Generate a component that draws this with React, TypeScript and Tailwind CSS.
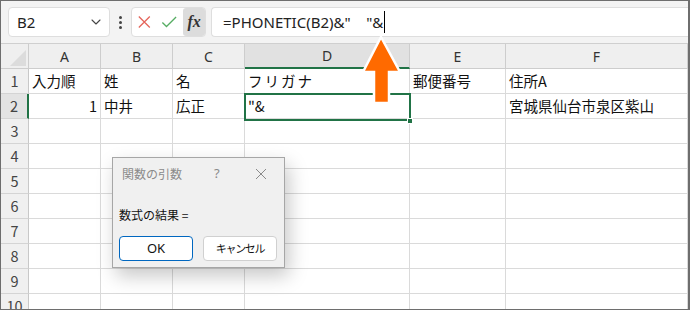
import React from 'react';
import { ChevronDown } from 'lucide-react';

const cjk = { fontFamily: '"Noto Sans CJK JP", "Noto Sans", sans-serif' };
const latin = { fontFamily: '"Noto Sans", "Noto Sans CJK JP", sans-serif' };

const cols = ['A', 'B', 'C', 'D', 'E', 'F'];

const rows: string[][] = [
  ['入力順', '姓', '名', 'フリガナ', '郵便番号', '住所A'],
  ['1', '中井', '広正', '"&', '', '宮城県仙台市泉区紫山'],
  ['', '', '', '', '', ''],
  ['', '', '', '', '', ''],
  ['', '', '', '', '', ''],
  ['', '', '', '', '', ''],
  ['', '', '', '', '', ''],
  ['', '', '', '', '', ''],
  ['', '', '', '', '', ''],
  ['', '', '', '', '', ''],
];

const gridCols = 'grid grid-cols-[28px_72px_72px_72px_165px_96px_1fr]';

export default function App() {
  return (
    <div className="relative w-[690px] h-[310px] overflow-hidden bg-white border border-r-2 border-[#6e6e6e]">
      {/* Formula bar */}
      <div className="h-[43px] bg-[#f3f3f3] border-b border-[#cfcfcf] flex items-center pl-[7px] gap-0">
        <div className="w-[102px] h-[30px] bg-white border border-[#dedede] rounded-[4px] flex items-center justify-between pl-[8px] pr-[5px]">
          <span className="text-[15px] text-[#222]" style={latin}>B2</span>
          <ChevronDown className="w-4 h-4 text-[#444]" strokeWidth={1.6} />
        </div>
        <div className="w-[21px] flex flex-col items-center gap-[2px]">
          <span className="w-[3px] h-[3px] bg-[#444] rounded-full" />
          <span className="w-[3px] h-[3px] bg-[#444] rounded-full" />
          <span className="w-[3px] h-[3px] bg-[#444] rounded-full" />
        </div>
        <div className="w-[75px] h-[30px] bg-white border border-[#dedede] rounded-[4px] flex items-center pl-[4px]">
          <svg width="16" height="16" viewBox="0 0 16 16" className="ml-[1px]">
            <path d="M2 2 L14 14 M14 2 L2 14" stroke="#e5645a" strokeWidth="1.4" fill="none" />
          </svg>
          <svg width="18" height="16" viewBox="0 0 18 16" className="ml-[9px]">
            <path d="M1.5 8.5 L6 13 L16.5 2.5" stroke="#56ad63" strokeWidth="1.4" fill="none" />
          </svg>
          <div className="ml-[6px] w-[24px] h-[28px] bg-[#dcdcdc] rounded-[3px] flex items-center justify-center">
            <span className="italic text-[16px] text-[#333] font-semibold" style={{ fontFamily: '"Liberation Serif", serif' }}>fx</span>
          </div>
        </div>
        <div className="ml-[5px] flex-1 h-[30px] bg-white border border-[#dedede] rounded-l-[4px] border-r-0 flex items-center pl-[11px]">
          <span className="text-[15px] text-[#222] whitespace-pre" style={latin}>=PHONETIC(B2)&amp;"    "&amp;</span>
          <span className="w-px h-[22px] bg-black ml-[1px]" />
        </div>
      </div>

      {/* Column header */}
      <div className={`${gridCols} h-[25px]`}>
        <div className="bg-[#efefef] border-r border-b border-[#cdcdcd] relative">
          <svg width="16" height="16" viewBox="0 0 16 16" className="absolute right-[2px] bottom-[2px]">
            <path d="M16 0 L16 16 L0 16 Z" fill="#dcdcdc" />
          </svg>
        </div>
        {cols.map((c) => (
          <div
            key={c}
            className={`flex items-center justify-center text-[14px] text-[#333] border-r ${
              c === 'D' ? 'bg-[#e1e1e1] border-b-2 border-b-[#217346] border-r-[#cdcdcd]' : 'bg-[#efefef] border-b border-[#cdcdcd]'
            }`}
            style={latin}
          >
            {c}
          </div>
        ))}
      </div>

      {/* Rows */}
      {rows.map((r, i) => (
        <div key={i} className={`${gridCols} h-[25px]`}>
          <div
            className={`flex items-center justify-center text-[14.5px] text-[#444] border-b border-[#d4d4d4] ${
              i === 1 ? 'bg-[#e3e3e3] border-r-2 border-r-[#217346]' : 'bg-[#f0f0f0] border-r border-r-[#c8c8c8]'
            }`}
            style={cjk}
          >
            {i + 1}
          </div>
          {r.map((v, j) => (
            <div
              key={j}
              className={`flex items-center border-r border-b border-[#dadada] text-[14.5px] text-[#111] whitespace-nowrap overflow-visible px-[3px] ${
                i === 1 && j === 0 ? 'justify-end' : ''
              } ${i === 0 && j === 3 ? 'tracking-[2px]' : ''}`}
              style={cjk}
            >
              {v}
            </div>
          ))}
        </div>
      ))}

      {/* Active cell */}
      <div className="absolute left-[243px] top-[92px] w-[167px] h-[28px] border-2 border-[#217346]" />
      <div className="absolute left-[406px] top-[117px] w-[6px] h-[6px] bg-[#217346] border border-white" />

      {/* Arrow */}
      <svg className="absolute left-[358px] top-[34px]" width="46" height="70" viewBox="0 0 46 70">
        <path
          d="M22 2 L41 37 L30 37 L30 68 L15 68 L15 37 L4 37 Z"
          fill="#ff6a00"
          stroke="#ffffff"
          strokeWidth="2.5"
          strokeLinejoin="miter"
        />
      </svg>

      {/* Dialog */}
      <div
        className="absolute left-[111px] top-[156px] w-[173px] h-[111px] bg-[#f0f0f0] border border-[#a6a6a6] shadow-[4px_8px_18px_rgba(0,0,0,0.22)] flex flex-col"
        style={cjk}
      >
        <div className="h-[31px] flex items-center pl-[9px] text-[12px] text-[#8a8a8a]">
          <span>関数の引数</span>
          <span className="ml-[32px] text-[13px]" style={latin}>?</span>
          <svg width="12" height="12" viewBox="0 0 12 12" className="ml-[35px]">
            <path d="M1 1 L11 11 M11 1 L1 11" stroke="#8a8a8a" strokeWidth="1" fill="none" />
          </svg>
        </div>
        <div className="pl-[6px] pt-[17px] text-[12px] text-[#111] whitespace-pre">数式の結果 =</div>
        <div className="flex gap-[10px] pl-[6px] pt-[12px]">
          <div className="w-[74px] h-[25px] bg-white border border-[#0067c0] rounded-[4px] flex items-center justify-center text-[13px] text-[#111]" style={latin}>
            OK
          </div>
          <div className="w-[74px] h-[25px] bg-white border border-[#d0d0d0] rounded-[4px] flex items-center justify-center text-[11px] tracking-[-1.3px] text-[#111]">
            キャンセル
          </div>
        </div>
      </div>
    </div>
  );
}
